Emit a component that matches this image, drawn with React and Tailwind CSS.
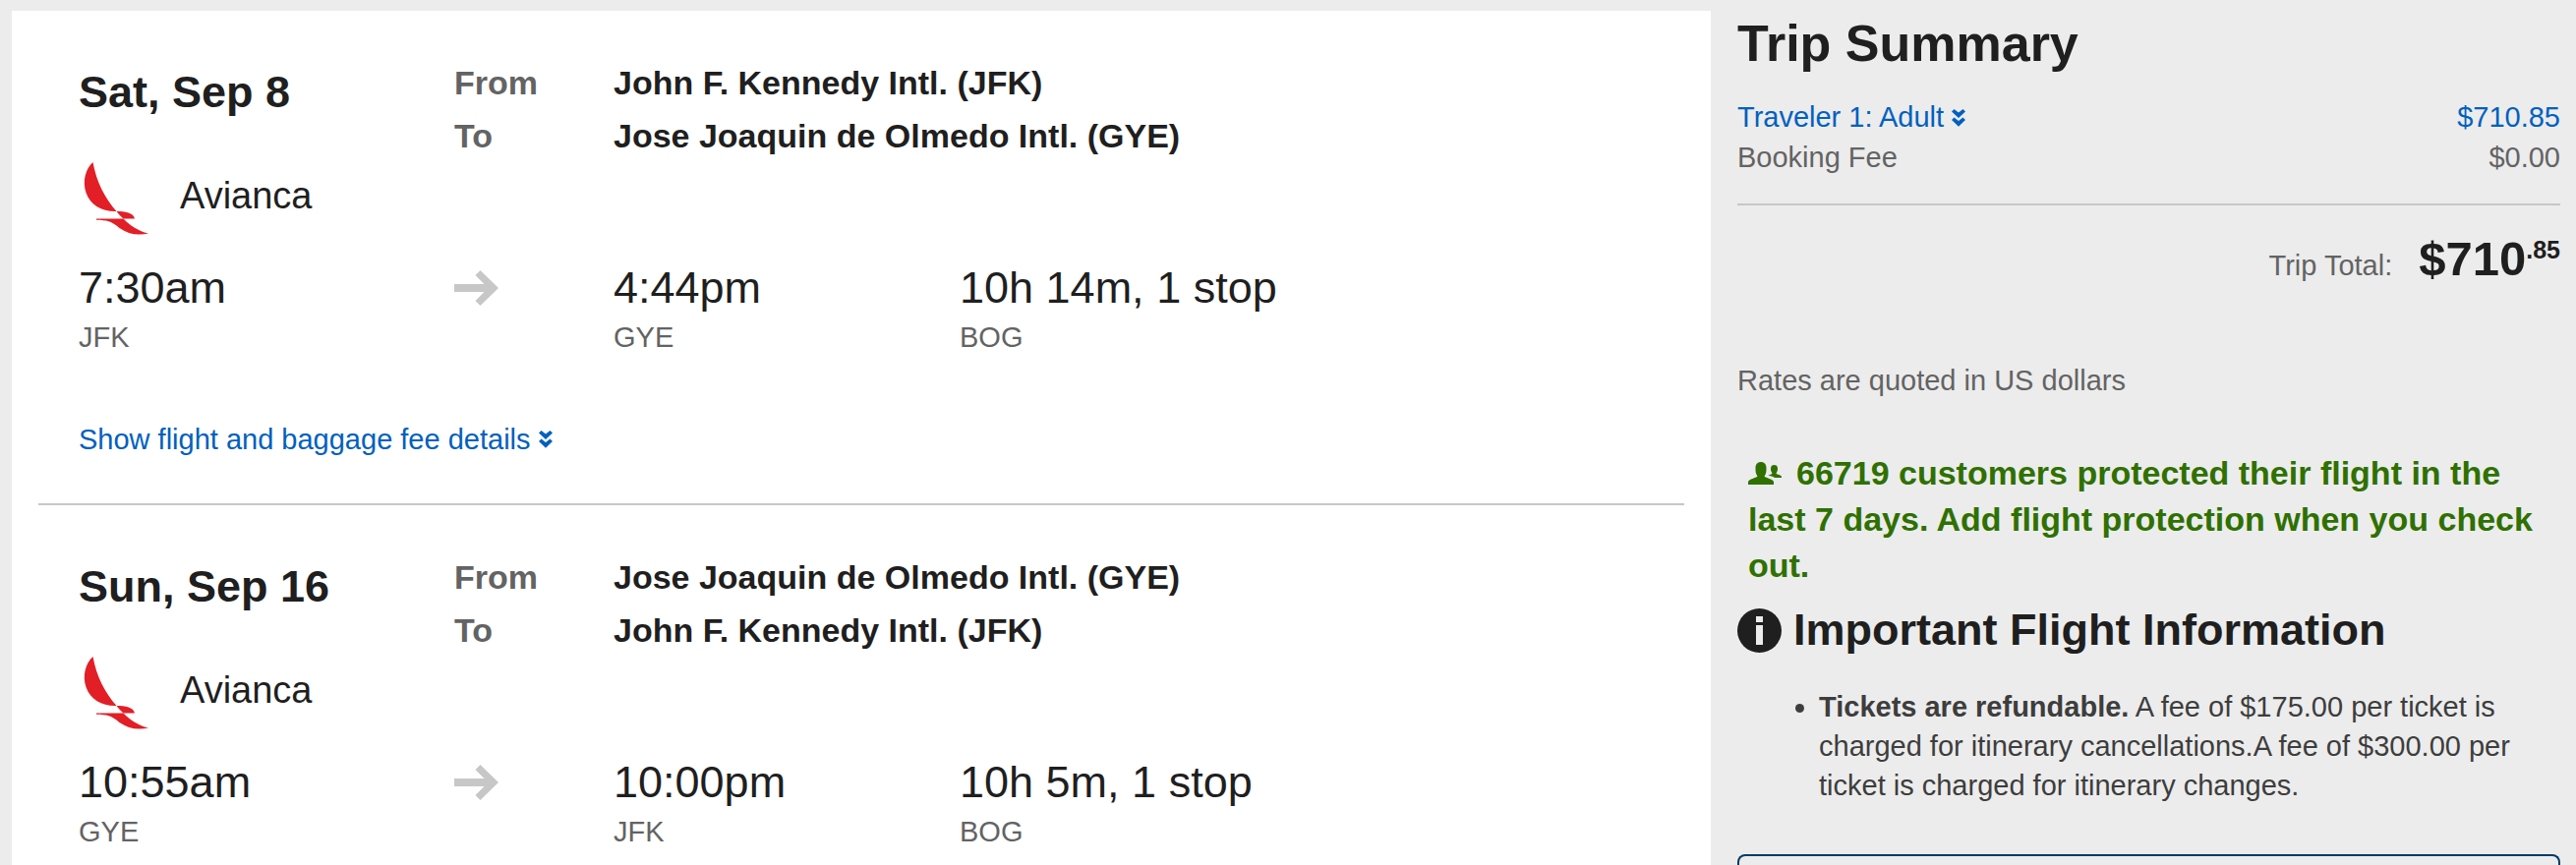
const legs = [
  {
    date: 'Sat, Sep 8',
    airline: 'Avianca',
    from: 'John F. Kennedy Intl. (JFK)',
    to: 'Jose Joaquin de Olmedo Intl. (GYE)',
    departure: { time: '7:30am', code: 'JFK' },
    arrival: { time: '4:44pm', code: 'GYE' },
    duration: '10h 14m, 1 stop',
    via: 'BOG',
    details: true,
  },
  {
    date: 'Sun, Sep 16',
    airline: 'Avianca',
    from: 'Jose Joaquin de Olmedo Intl. (GYE)',
    to: 'John F. Kennedy Intl. (JFK)',
    departure: { time: '10:55am', code: 'GYE' },
    arrival: { time: '10:00pm', code: 'JFK' },
    duration: '10h 5m, 1 stop',
    via: 'BOG',
  },
]

function AviancaLogo() {
  return (
    <svg viewBox="0 0 82 82" className="size-[82px] shrink-0" fill="#e21f26" aria-hidden="true">
      <path d="M14.500 7C18 27 27 44 38.500 57C24 57.500 12 51 7.500 38C3.500 26 7 14 14.500 7Z" />
      <path d="M38.500 57C47 57 56 58.500 57 64.500H45.500C43 62 40.500 60 38.500 57Z" />
      <path d="M18 64.500H45.500C52 71 60 77 71 79.500C60 82 50 80 41.500 74C33 67 29 66 18 65.800Z" />
    </svg>
  )
}

function ArrowRight() {
  return (
    <svg viewBox="0 0 46 36" className="h-9 w-[46px]" fill="#c7c7c7" aria-hidden="true">
      <path d="M0 14H30.500L21.500 5L26.500 0L45 18L26.500 36L21.500 31L30.500 22H0Z" />
    </svg>
  )
}

function DoubleChevron() {
  return (
    <svg viewBox="0 0 14 18" className="h-[18px] w-3.5" fill="currentColor" aria-hidden="true">
      <path d="M0 2.500L2.500 0L7 3.500L11.500 0L14 2.500L7 9Z" />
      <path d="M0 11L2.500 8.500L7 12L11.500 8.500L14 11L7 17.800Z" />
    </svg>
  )
}

function PeopleIcon() {
  return (
    <svg viewBox="0 0 34 23" className="mr-[15px] inline-block h-[23px] w-[34px] align-baseline" fill="currentColor" aria-hidden="true">
      <path d="M0 23V20C1 17 8 16.500 9.500 14.500C7.500 12 7.500 9 7.500 6C7.500 2 10 0 13 0S18.500 2 18.500 6C18.500 9 18.500 12 16.500 14.500C18 16.500 25 17 26 20V23Z" />
      <path d="M34 16H27C25 14.500 22.500 14 20.500 13.500C22 13 24 12.500 24.500 11.500C23 9.500 23 8 23 6.500C23 4 24.500 3 26.500 3S30 4 30 6.500C30 8 30 9.500 28.500 11.500C29.500 13 33.500 13 34 15Z" />
    </svg>
  )
}

function InfoIcon() {
  return (
    <svg viewBox="0 0 45 45" className="size-[45px] shrink-0" aria-hidden="true">
      <circle cx="22.500" cy="22.500" r="22.500" fill="#1f1f1f" />
      <rect x="19" y="8" width="7" height="6" fill="#ececec" />
      <rect x="19" y="17" width="7" height="20" fill="#ececec" />
    </svg>
  )
}

function Stop({ title, code }) {
  return (
    <div>
      <p className="text-[45px] leading-14">{title}</p>
      <p className="text-[29px] leading-11 text-[#636363]">{code}</p>
    </div>
  )
}

function Leg({ leg }) {
  return (
    <section className="px-[41px] pt-[46px]">
      <div className="flex">
        <div className="w-[382px]">
          <h2 className="text-[45px] leading-[74px] font-bold">{leg.date}</h2>
          <div className="mt-[27px] flex items-center gap-[21px]">
            <AviancaLogo />
            <span className="text-[38px]">{leg.airline}</span>
          </div>
        </div>
        <dl className="grid grid-cols-[162px_auto] content-start text-[34px] leading-[54px] font-bold">
          <dt className="text-[#636363]">From</dt>
          <dd>{leg.from}</dd>
          <dt className="text-[#636363]">To</dt>
          <dd>{leg.to}</dd>
        </dl>
      </div>

      <div className="mt-[25px] grid grid-cols-[382px_162px_352px_auto]">
        <Stop title={leg.departure.time} code={leg.departure.code} />
        <div className="flex h-14 items-center">
          <ArrowRight />
        </div>
        <Stop title={leg.arrival.time} code={leg.arrival.code} />
        <Stop title={leg.duration} code={leg.via} />
      </div>

      {leg.details && (
        <a href="#details" className="mt-[62px] mb-[45px] flex w-fit items-center gap-2 text-[29px] leading-10 text-[#0060bf]">
          Show flight and baggage fee details
          <DoubleChevron />
        </a>
      )}
    </section>
  )
}

function TripSummary() {
  return (
    <aside className="flex flex-col pt-[3px] text-[29px] leading-[41px] text-[#636363]">
      <h1 className="text-[52px] leading-[60px] font-bold text-[#1f1f1f]">Trip Summary</h1>

      <div className="mt-[25px] flex justify-between text-[#0060bf]">
        <a href="#traveler" className="flex items-center gap-2">
          Traveler 1: Adult
          <DoubleChevron />
        </a>
        <span>$710.85</span>
      </div>
      <div className="flex justify-between">
        <span>Booking Fee</span>
        <span>$0.00</span>
      </div>

      <div className="mt-[26px] flex items-baseline justify-end gap-[27px] border-t-2 border-[#c7c7c7] pt-6">
        <span>Trip Total:</span>
        <strong className="text-[49px] leading-[60px] text-[#1f1f1f]">
          $710<sup className="static align-super text-[25px] leading-none">.85</sup>
        </strong>
      </div>

      <p className="mt-[74px]">Rates are quoted in US dollars</p>

      <p className="mt-[50px] px-[11px] text-[34px] leading-[47px] font-bold text-[#2f7000]">
        <PeopleIcon />
        66719 customers protected their flight in the last 7 days. Add flight protection when you check out.
      </p>

      <h2 className="mt-[15px] flex items-center gap-3 text-[45px] leading-[54px] font-bold text-[#1f1f1f]">
        <InfoIcon />
        Important Flight Information
      </h2>

      <ul className="mt-[31px] list-disc pl-[83px] leading-10 text-[#3d3d3d]">
        <li>
          <b>Tickets are refundable.</b> A fee of $175.00 per ticket is charged for itinerary cancellations.A fee of
          $300.00 per ticket is charged for itinerary changes.
        </li>
      </ul>

      <div className="mt-[50px] flex-1 rounded-t-lg border-2 border-b-0 border-[#003c66]" />
    </aside>
  )
}

export default function App() {
  return (
    <div className="grid min-h-screen grid-cols-[64fr_31fr] gap-[27px] bg-[#ececec] pt-[11px] pr-4 pl-3 font-['Liberation_Sans',Arial,sans-serif] text-[#1f1f1f]">
      <main className="divide-y-2 divide-[#c7c7c7] bg-white px-[27px]">
        {legs.map((leg) => (
          <Leg key={leg.date} leg={leg} />
        ))}
      </main>
      <TripSummary />
    </div>
  )
}
